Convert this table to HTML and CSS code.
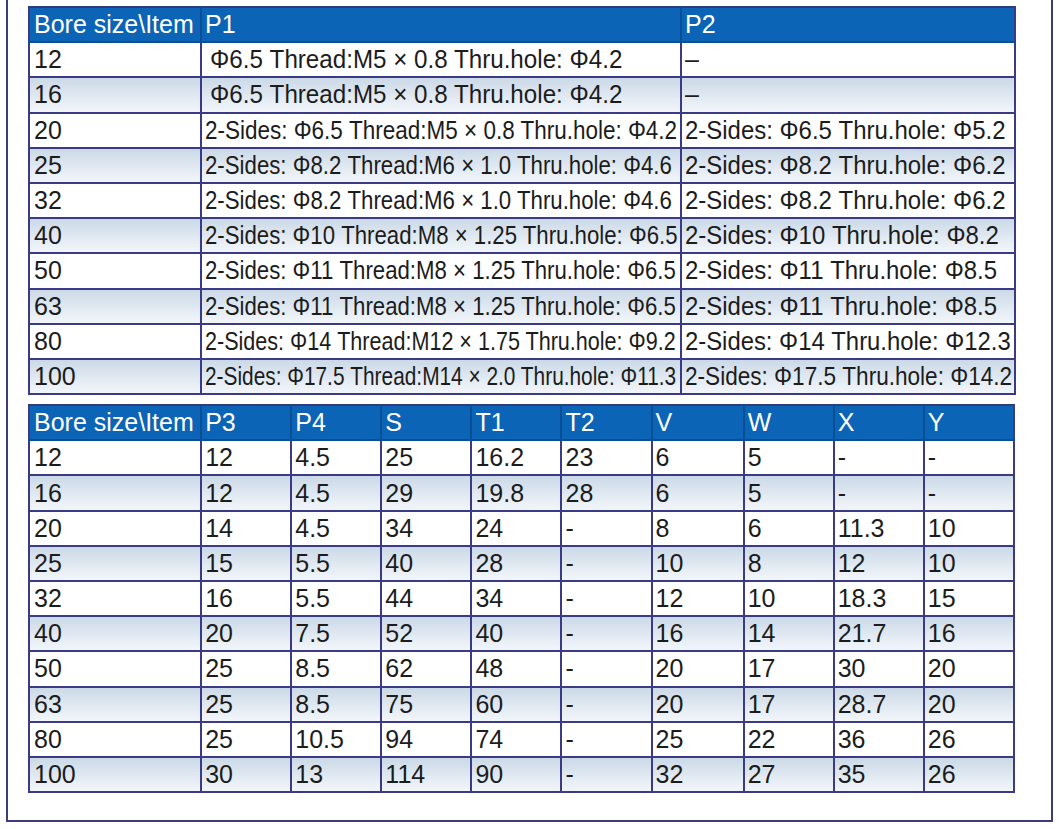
FILE: index.html
```html
<!DOCTYPE html>
<html lang="en">
<head>
<meta charset="utf-8">
<title>Bore size table</title>
<link rel="stylesheet" href="styles.css">
</head>
<body>
<div class="frame">
  <table class="spec spec-a">
    <colgroup>
      <col class="c-bore"><col class="c-p1"><col class="c-p2">
    </colgroup>
    <thead>
      <tr><th>Bore size\Item</th><th>P1</th><th>P2</th></tr>
    </thead>
    <tbody>
      <tr><td>12</td><td><span class="tx ind">Φ6.5 Thread:M5 × 0.8 Thru.hole: Φ4.2</span></td><td>–</td></tr>
      <tr class="alt"><td>16</td><td><span class="tx ind">Φ6.5 Thread:M5 × 0.8 Thru.hole: Φ4.2</span></td><td>–</td></tr>
      <tr><td>20</td><td><span class="tx a20">2-Sides: Φ6.5 Thread:M5 × 0.8 Thru.hole: Φ4.2</span></td><td><span class="tx b20">2-Sides: Φ6.5 Thru.hole: Φ5.2</span></td></tr>
      <tr class="alt"><td>25</td><td><span class="tx a25">2-Sides: Φ8.2 Thread:M6 × 1.0 Thru.hole: Φ4.6</span></td><td><span class="tx b20">2-Sides: Φ8.2 Thru.hole: Φ6.2</span></td></tr>
      <tr><td>32</td><td><span class="tx a25">2-Sides: Φ8.2 Thread:M6 × 1.0 Thru.hole: Φ4.6</span></td><td><span class="tx b20">2-Sides: Φ8.2 Thru.hole: Φ6.2</span></td></tr>
      <tr class="alt"><td>40</td><td><span class="tx a40">2-Sides: Φ10 Thread:M8 × 1.25 Thru.hole: Φ6.5</span></td><td><span class="tx b20">2-Sides: Φ10 Thru.hole: Φ8.2</span></td></tr>
      <tr><td>50</td><td><span class="tx a40">2-Sides: Φ11 Thread:M8 × 1.25 Thru.hole: Φ6.5</span></td><td><span class="tx b20">2-Sides: Φ11 Thru.hole: Φ8.5</span></td></tr>
      <tr class="alt"><td>63</td><td><span class="tx a40">2-Sides: Φ11 Thread:M8 × 1.25 Thru.hole: Φ6.5</span></td><td><span class="tx b20">2-Sides: Φ11 Thru.hole: Φ8.5</span></td></tr>
      <tr><td>80</td><td><span class="tx a80">2-Sides: Φ14 Thread:M12 × 1.75 Thru.hole: Φ9.2</span></td><td><span class="tx b80">2-Sides: Φ14 Thru.hole: Φ12.3</span></td></tr>
      <tr class="alt"><td>100</td><td><span class="tx a100">2-Sides: Φ17.5 Thread:M14 × 2.0 Thru.hole: Φ11.3</span></td><td><span class="tx b100">2-Sides: Φ17.5 Thru.hole: Φ14.2</span></td></tr>
    </tbody>
  </table>

  <table class="spec spec-b">
    <colgroup>
      <col class="c-bore"><col class="c-n"><col class="c-n"><col class="c-n"><col class="c-n"><col class="c-n"><col class="c-n2"><col class="c-n"><col class="c-n"><col class="c-n">
    </colgroup>
    <thead>
      <tr><th>Bore size\Item</th><th>P3</th><th>P4</th><th>S</th><th>T1</th><th>T2</th><th>V</th><th>W</th><th>X</th><th>Y</th></tr>
    </thead>
    <tbody>
      <tr><td>12</td><td>12</td><td>4.5</td><td>25</td><td>16.2</td><td>23</td><td>6</td><td>5</td><td>-</td><td>-</td></tr>
      <tr class="alt"><td>16</td><td>12</td><td>4.5</td><td>29</td><td>19.8</td><td>28</td><td>6</td><td>5</td><td>-</td><td>-</td></tr>
      <tr><td>20</td><td>14</td><td>4.5</td><td>34</td><td>24</td><td>-</td><td>8</td><td>6</td><td>11.3</td><td>10</td></tr>
      <tr class="alt"><td>25</td><td>15</td><td>5.5</td><td>40</td><td>28</td><td>-</td><td>10</td><td>8</td><td>12</td><td>10</td></tr>
      <tr><td>32</td><td>16</td><td>5.5</td><td>44</td><td>34</td><td>-</td><td>12</td><td>10</td><td>18.3</td><td>15</td></tr>
      <tr class="alt"><td>40</td><td>20</td><td>7.5</td><td>52</td><td>40</td><td>-</td><td>16</td><td>14</td><td>21.7</td><td>16</td></tr>
      <tr><td>50</td><td>25</td><td>8.5</td><td>62</td><td>48</td><td>-</td><td>20</td><td>17</td><td>30</td><td>20</td></tr>
      <tr class="alt"><td>63</td><td>25</td><td>8.5</td><td>75</td><td>60</td><td>-</td><td>20</td><td>17</td><td>28.7</td><td>20</td></tr>
      <tr><td>80</td><td>25</td><td>10.5</td><td>94</td><td>74</td><td>-</td><td>25</td><td>22</td><td>36</td><td>26</td></tr>
      <tr class="alt"><td>100</td><td>30</td><td>13</td><td>114</td><td>90</td><td>-</td><td>32</td><td>27</td><td>35</td><td>26</td></tr>
    </tbody>
  </table>
</div>
</body>
</html>
```

FILE: styles.css
```css
html, body {
  margin: 0;
  padding: 0;
  background: #ffffff;
}

body {
  font-family: "Liberation Sans", Arial, sans-serif;
  color: #1c1c1c;
}

.frame {
  box-sizing: border-box;
  width: 1047px;
  height: 822px;
  margin-left: 6px;
  padding: 6px 0 0 20px;
  border: 2px solid #3d3b7c;
  border-top: none;
}

.spec {
  border-collapse: collapse;
  table-layout: fixed;
  font-size: 25px;
}

.spec-a {
  width: 988px;
}

.spec-b {
  width: 987px;
  margin-top: 9px;
}

.c-bore { width: 172px; }
.c-p1 { width: 480px; }
.c-n { width: 90px; }
.c-n2 { width: 92px; }

.spec th,
.spec td {
  border: 2px solid #3b3a86;
  height: 33.2px;
  padding: 0 0 0 4px;
  text-align: left;
  vertical-align: middle;
  white-space: nowrap;
  overflow: hidden;
  line-height: 33px;
}

.spec td + td,
.spec th + th {
  padding-left: 3px;
}

.spec th {
  background: #0b64b5;
  color: #ffffff;
  font-weight: normal;
  border-color: #0a4f96;
  border-top-color: #2e3c7c;
}

.spec th:first-child { border-left-color: #3b3a86; }
.spec th:last-child { border-right-color: #3b3a86; }

.spec tr.alt td {
  background: linear-gradient(to bottom, #cbd9e7 0%, #dfe8f1 50%, #f2f6fa 100%);
}

.tx {
  display: inline-block;
  transform-origin: left center;
}

.ind {
  margin-left: 5px;
  transform: scaleX(0.967);
}

.a20 { transform: scaleX(0.899); }
.a25 { transform: scaleX(0.889); }
.a40 { transform: scaleX(0.888); }
.a80 { transform: scaleX(0.862); }
.a100 { transform: scaleX(0.834); }

.b20 { transform: scaleX(0.958); }
.b80 { transform: scaleX(0.954); }
.b100 { transform: scaleX(0.903); }
```
